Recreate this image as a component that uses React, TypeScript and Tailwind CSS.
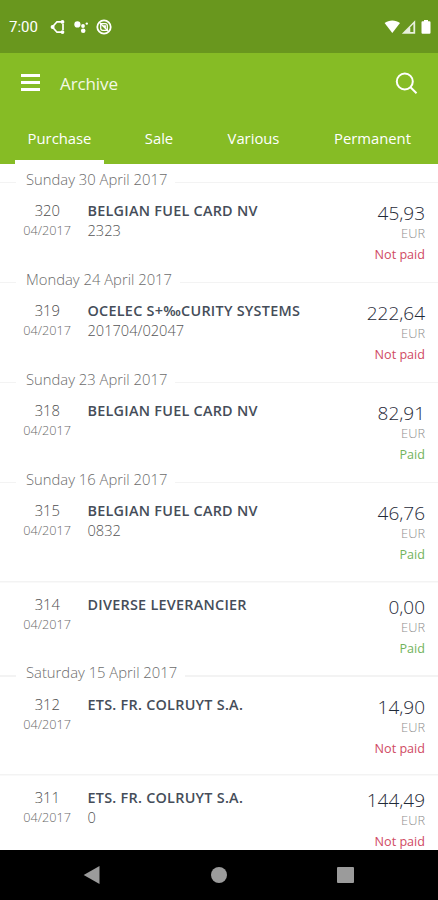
import React from "react";

type Entry = {
  id: string;
  name: string;
  reference?: string;
  amount: string;
  paid: boolean;
};

type Group = { date: string; entries: Entry[] };

const tabs = [
  { label: "Purchase", box: "w-[89px] ml-[15px]", active: true },
  { label: "Sale", box: "w-[110px]", active: false },
  { label: "Various", box: "w-[79px]", active: false },
  { label: "Permanent", box: "w-[145px] pl-[14px]", active: false },
];

const groups: Group[] = [
  {
    date: "Sunday 30 April 2017",
    entries: [{ id: "320", name: "BELGIAN FUEL CARD NV", reference: "2323", amount: "45,93", paid: false }],
  },
  {
    date: "Monday 24 April 2017",
    entries: [{ id: "319", name: "OCELEC S+‰CURITY SYSTEMS", reference: "201704/02047", amount: "222,64", paid: false }],
  },
  {
    date: "Sunday 23 April 2017",
    entries: [{ id: "318", name: "BELGIAN FUEL CARD NV", amount: "82,91", paid: true }],
  },
  {
    date: "Sunday 16 April 2017",
    entries: [
      { id: "315", name: "BELGIAN FUEL CARD NV", reference: "0832", amount: "46,76", paid: true },
      { id: "314", name: "DIVERSE LEVERANCIER", amount: "0,00", paid: true },
    ],
  },
  {
    date: "Saturday 15 April 2017",
    entries: [
      { id: "312", name: "ETS. FR. COLRUYT S.A.", amount: "14,90", paid: false },
      { id: "311", name: "ETS. FR. COLRUYT S.A.", reference: "0", amount: "144,49", paid: false },
    ],
  },
];

function StatusBar() {
  return (
    <div className="flex h-[53px] shrink-0 items-center bg-[#69971e] pl-[9px] pr-[7px] text-white">
      <span className="w-[41px] pt-px font-[Roboto,sans-serif] text-[15px] leading-5">7:00</span>
      <svg className="h-4 w-4" viewBox="0 0 16 16" fill="none" stroke="currentColor">
        <path d="M3 7.200 7 2.800h4M3 8.800l4 4.400h4M13 5v6" strokeWidth="1.700" />
        <circle cx="2.600" cy="8" r="2" fill="currentColor" stroke="none" />
        <circle cx="12.500" cy="2.900" r="1.900" fill="currentColor" stroke="none" />
        <circle cx="12.500" cy="13.100" r="1.900" fill="currentColor" stroke="none" />
      </svg>
      <svg className="ml-2 h-4 w-4" viewBox="0 0 16 16" fill="currentColor">
        <circle cx="3.400" cy="5.400" r="3.100" />
        <circle cx="9" cy="7" r="1.900" />
        <circle cx="9.200" cy="11.700" r="2.300" />
        <circle cx="12.800" cy="4.600" r="1.200" />
      </svg>
      <svg className="ml-[6px] h-4 w-4" viewBox="0 0 16 16" fill="none" stroke="currentColor">
        <circle cx="8" cy="8" r="6.700" strokeWidth="1.800" />
        <path d="M4.700 4.700h4.600a2 2 0 0 1 2 2v4.600H6.700a2 2 0 0 1-2-2Z" strokeWidth="1.300" />
        <path d="m4 4 8 8M7.300 6.800h2v2" strokeWidth="1.300" />
      </svg>
      <svg className="ml-auto h-4 w-[17px]" viewBox="0 0 17 16" fill="currentColor">
        <path d="M.6 4C4.800.6 11.800.6 16 4L8.300 14Z" />
      </svg>
      <svg className="h-4 w-[15px]" viewBox="0 0 15 16">
        <path d="M.8 14.800 14.200 1.200V14.800Z" fill="white" fillOpacity=".85" />
        <path d="M9.300 8.300 12.400 5V13.100H9.300Z" fill="#69971e" />
      </svg>
      <svg className="ml-[5px] h-4 w-[10px]" viewBox="0 0 10 16" fill="currentColor">
        <path d="M3 1h4v1.300h1.500q1 0 1 1v10.400q0 1-1 1h-7q-1 0-1-1V3.300q0-1 1-1H3Z" />
      </svg>
    </div>
  );
}

function AppBar() {
  return (
    <header className="flex h-[111px] shrink-0 flex-col bg-[#86bc25] text-white">
      <div className="flex h-[62px] items-center pl-[21px] pr-5">
        <div className="flex w-[39px] flex-col gap-[4.500px] pb-[3px]">
          <span className="h-[2.500px] w-[19px] bg-white" />
          <span className="h-[2.500px] w-[19px] bg-white" />
          <span className="h-[2.500px] w-[19px] bg-white" />
        </div>
        <h1 className="text-[17px] leading-6 tracking-[-0.100px] text-[#f3f9e6]">Archive</h1>
        <svg className="mb-[3px] ml-auto h-6 w-6" viewBox="0 0 24 24" fill="none" stroke="currentColor" strokeWidth="2">
          <circle cx="10.800" cy="10.500" r="8" />
          <path d="m16.500 16.300 6 5.900" />
        </svg>
      </div>
      <nav className="flex flex-1">
        {tabs.map((tab) => (
          <div
            key={tab.label}
            className={`flex shrink-0 justify-center border-b-4 pt-[13px] text-[14.800px] leading-5 ${tab.box} ${
              tab.active ? "border-white" : "border-transparent"
            }`}
          >
            {tab.label}
          </div>
        ))}
      </nav>
    </header>
  );
}

function Row({ entry, divided }: { entry: Entry; divided: boolean }) {
  return (
    <div className={`flex h-[93.700px] pr-[13px] ${divided ? "shadow-[inset_0_1.500px_0_#f3f3f3]" : ""}`}>
      <div className="flex w-[71px] flex-col items-end pt-[14px] font-light">
        <span className="pr-[11px] text-[14.800px] leading-[19px] text-[#4d4d4d]">{entry.id}</span>
        <span className="text-[12.700px] leading-5 text-[#6b6b6b]">04/2017</span>
      </div>
      <div className="flex flex-1 flex-col pl-[16.500px] pt-[14px]">
        <span className="text-[14.400px] font-semibold leading-[19px] tracking-[0.260px] text-[#454d59]">{entry.name}</span>
        <span className="text-[14.600px] font-light leading-5 text-[#555]">{entry.reference}</span>
      </div>
      <div className="flex flex-col items-end">
        <span className="mt-[14px] text-[19px] font-light leading-6 text-[#1f2a38]">{entry.amount}</span>
        <span className="text-[12.800px] font-light leading-4 text-[#8f8f8f]">EUR</span>
        <span className={`mt-[6px] text-[12.600px] leading-[15px] ${entry.paid ? "text-[#72b35b]" : "text-[#d04a63]"}`}>
          {entry.paid ? "Paid" : "Not paid"}
        </span>
      </div>
    </div>
  );
}

function DateHeading({ date }: { date: string }) {
  return (
    <div className="flex h-[6.300px] items-start">
      <span className="mt-px h-[1.500px] w-4 bg-[#f3f3f3]" />
      <h2 className="-mt-3 ml-[10px] mr-2 whitespace-nowrap text-[14.800px] font-light leading-5 text-[#6c6c6c]">{date}</h2>
      <span className="mt-px h-[1.500px] flex-1 bg-[#f3f3f3]" />
    </div>
  );
}

function NavigationBar() {
  return (
    <footer className="flex h-[50px] shrink-0 items-center bg-black pl-[83px] text-[#9b9b9b]">
      <svg className="h-[18px] w-[17px]" viewBox="0 0 17 18" fill="currentColor">
        <path d="M16.500 0v18L.7 9Z" />
      </svg>
      <span className="ml-[111px] h-4 w-4 rounded-full bg-[#9b9b9b]" />
      <span className="ml-[110px] h-4 w-[17px] rounded-[1px] bg-[#9b9b9b]" />
    </footer>
  );
}

export default function App() {
  return (
    <div className="flex h-[900px] w-[438px] flex-col overflow-hidden bg-white font-['Open_Sans','Noto_Sans',sans-serif]">
      <StatusBar />
      <AppBar />
      <main className="min-h-0 flex-1 overflow-hidden pt-[16.800px]">
        {groups.map((group) => (
          <section key={group.date}>
            <DateHeading date={group.date} />
            {group.entries.map((entry, i) => (
              <Row key={entry.id} entry={entry} divided={i > 0} />
            ))}
          </section>
        ))}
      </main>
      <NavigationBar />
    </div>
  );
}
